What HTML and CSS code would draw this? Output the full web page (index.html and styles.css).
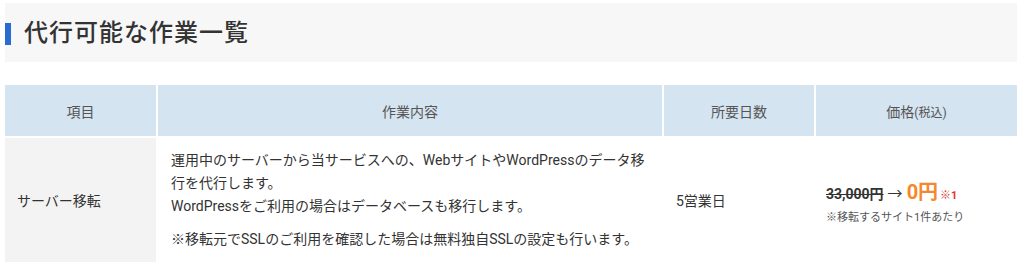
FILE: index.html
```html
<!DOCTYPE html>
<html lang="ja">
<head>
<meta charset="utf-8">
<link rel="stylesheet" href="styles.css">
</head>
<body>
<div class="page">
  <div class="heading-box">
    <span class="heading-bar"></span>
    <h2 class="heading">代行可能な作業一覧</h2>
  </div>
  <table class="work-table">
    <colgroup>
      <col class="c1"><col class="c2"><col class="c3"><col class="c4">
    </colgroup>
    <thead>
      <tr>
        <th>項目</th>
        <th>作業内容</th>
        <th>所要日数</th>
        <th>価格<span class="tax">(税込)</span></th>
      </tr>
    </thead>
    <tbody>
      <tr>
        <td class="item">サーバー移転</td>
        <td class="desc">
          <p>運用中のサーバーから当サービスへの、WebサイトやWordPressのデータ移行を代行します。<br>WordPressをご利用の場合はデータベースも移行します。</p>
          <p>※移転元でSSLのご利用を確認した場合は無料独自SSLの設定も行います。</p>
        </td>
        <td class="days">5営業日</td>
        <td class="price">
          <div class="price-line"><s class="old">33,000円</s> <span class="arrow">→</span> <span class="new">0円</span><span class="mark">※1</span></div>
          <div class="note">※移転するサイト1件あたり</div>
        </td>
      </tr>
    </tbody>
  </table>
</div>
</body>
</html>
```
FILE: styles.css
```css
html, body {
  margin: 0;
  padding: 0;
  background: #fff;
}
body {
  font-family: "Roboto", "Noto Sans CJK JP", sans-serif;
  color: #333;
}
.page {
  padding: 3px 7px 0 5px;
}
.heading-box {
  background: #f7f7f7;
  height: 59px;
  display: flex;
  align-items: center;
}
.heading-bar {
  width: 6px;
  height: 22px;
  background: #2a6bd1;
  margin-top: 2px;
}
.heading {
  margin: 0 0 0 13px;
  font-size: 24px;
  font-weight: 500;
  letter-spacing: 1px;
  color: #333;
  line-height: 1;
}
.work-table {
  margin-top: 23px;
  width: 1012px;
  border-collapse: collapse;
  table-layout: fixed;
  font-size: 14px;
}
.c1 { width: 152px; }
.c2 { width: 506px; }
.c3 { width: 152px; }
.c4 { width: 202px; }
.work-table th {
  background: #d5e4f1;
  height: 51px;
  padding: 0;
  font-weight: 400;
  color: #555;
  border: 2px solid #fff;
  border-top: 0;
  text-align: center;
}
.work-table th:first-child { border-left: 0; }
.work-table th:last-child { border-right: 0; }
.tax { font-size: 12px; }
.work-table td {
  border: 2px solid #fff;
  border-bottom: 0;
  vertical-align: middle;
  padding: 0 12px;
  color: #333;
}
.work-table td:first-child { border-left: 0; }
.work-table td:last-child { border-right: 0; }
.item {
  background: #f3f3f3;
}
.desc {
  padding: 11px 12px 11px 13px !important;
  line-height: 23px;
}
.desc p { margin: 0; }
.desc p + p { margin-top: 10px; }
.days { padding-left: 12px; }
.price { padding-left: 10px !important; }
.price-line {
  display: flex;
  align-items: baseline;
  font-weight: 700;
  gap: 4px;
}
.old { font-weight: 700; }
.arrow { font-weight: 400; font-size: 15px; }
.new {
  color: #f5882a;
  font-size: 20px;
  font-weight: 700;
}
.mark {
  color: #e0352f;
  font-size: 11px;
  margin-left: -2px;
}
.note {
  font-size: 11px;
  color: #555;
  margin-top: 3px;
}
```
